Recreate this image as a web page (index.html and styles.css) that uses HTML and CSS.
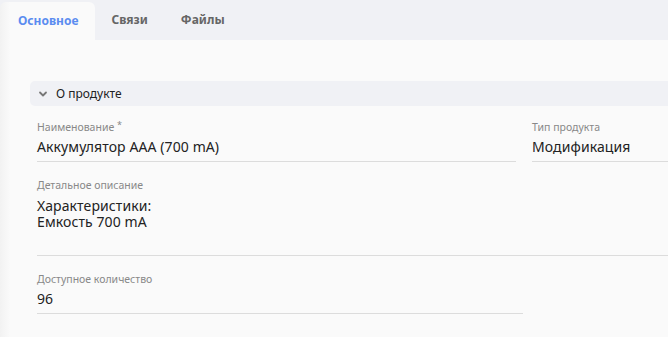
FILE: index.html
```html
<!DOCTYPE html>
<html lang="ru">
  <head>
    <meta charset="UTF-8" />
    <meta name="viewport" content="width=device-width, initial-scale=1.0" />
    <title>Продукт</title>
    <link rel="stylesheet" href="styles.css">
  </head>
  <body>
    <!-- Tabs -->
    <div class="tabs">
      <div class="tab active">Основное</div>
      <div class="tab">Связи</div>
      <div class="tab">Файлы</div>
    </div>

    <div class="page">
      <!-- Section header -->
      <div class="section-head">
        <svg class="chevron" width="10" height="10" viewBox="0 0 10 10">
          <path d="M2 3.5 L5 6.5 L8 3.5" fill="none" stroke="#777" stroke-width="1.8" stroke-linecap="round" stroke-linejoin="round" />
        </svg>
        <span>О продукте</span>
      </div>

      <div class="form">
        <div class="row">
          <div class="field name">
            <div class="label">Наименование <span class="req">*</span></div>
            <div class="value">Аккумулятор ААА (700 mA)</div>
          </div>
          <div class="field type">
            <div class="label">Тип продукта</div>
            <div class="value">Модификация</div>
          </div>
        </div>

        <div class="field desc">
          <div class="label">Детальное описание</div>
          <div class="value">
            <div class="line">Характеристики:</div>
            <div class="line">Емкость 700 mA</div>
          </div>
        </div>

        <div class="field qty">
          <div class="label">Доступное количество</div>
          <div class="value">96</div>
        </div>
      </div>
    </div>
  </body>
</html>
```

FILE: styles.css
```css
/* Base */
body {
  margin: 0;
  background-color: #fafafa;
  font-family: "Noto Sans", "DejaVu Sans", sans-serif;
  color: #222;
  overflow: hidden;
}

/* Tabs */
.tabs {
  display: flex;
  height: 40px;
  background-color: #f0f1f5;
}

.tab {
  padding: 0 17px 0 16px;
  line-height: 40px;
  font-size: 12px;
  font-weight: bold;
  color: #666;
}

.tab.active {
  margin-top: 2px;
  line-height: 38px;
  padding-left: 18px;
  color: #5b8cf0;
  background: linear-gradient(to right, #f2f2f2, #fafafa 10px);
  border-radius: 6px 6px 0 0;
}

/* Page */
.page {
  height: 297px;
  box-sizing: border-box;
  padding: 41px 0 0 30px;
  background: linear-gradient(to right, #f2f2f2, #fafafa 10px);
}

.section-head {
  display: flex;
  align-items: center;
  height: 25px;
  padding-left: 8px;
  background-color: #f0f1f5;
  border-radius: 5px 0 0 5px;
  font-size: 12px;
  color: #222;
}

.chevron {
  margin-right: 8px;
}

/* Form */
.form {
  padding: 13px 0 0 7px;
}

.row {
  display: grid;
  grid-template-columns: 479px 1fr;
  column-gap: 16px;
}

.field {
  border-bottom: 1px solid #dcdcdc;
}

.label {
  font-size: 10.5px;
  line-height: 16px;
  color: #888;
}

.req {
  font-size: 9px;
  vertical-align: top;
  line-height: 12px;
}

.value {
  padding-top: 4px;
  padding-bottom: 6px;
  font-size: 14px;
  line-height: 16px;
  letter-spacing: 0.1px;
  color: #222;
}

.desc {
  margin-top: 15px;
  height: 78px;
}

.desc .value {
  padding-top: 5px;
}

.qty {
  width: 486px;
  margin-top: 15px;
}
```
